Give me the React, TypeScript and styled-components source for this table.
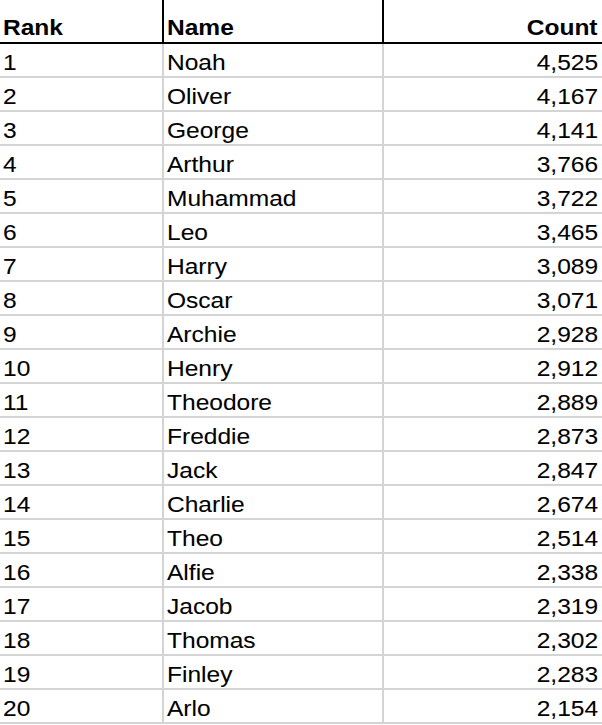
import React from "react";
import styled, { createGlobalStyle } from "styled-components";

const GlobalStyle = createGlobalStyle`
  html, body {
    margin: 0;
    padding: 0;
    background: #ffffff;
  }
  body {
    font-family: "Liberation Sans", Arial, Helvetica, sans-serif;
    color: #000000;
  }
`;

const Sheet = styled.div`
  display: grid;
  grid-template-columns: 164px 220px 1fr;
  width: 602px;
`;

type Align = "left" | "right";

const HeaderCell = styled.div<{ $align: Align; $last?: boolean }>`
  box-sizing: border-box;
  height: 44px;
  display: flex;
  align-items: flex-end;
  justify-content: ${(p) => (p.$align === "right" ? "flex-end" : "flex-start")};
  padding: 0 ${(p) => (p.$align === "right" ? "4px" : "0")} 2px
    ${(p) => (p.$align === "left" ? "3px" : "0")};
  border-bottom: 2px solid #000000;
  border-right: ${(p) => (p.$last ? "none" : "2px solid #000000")};
  font-weight: 700;
  font-size: 22px;
  line-height: 24px;
  white-space: nowrap;
`;

const Cell = styled.div<{ $align: Align; $last?: boolean }>`
  box-sizing: border-box;
  height: 34px;
  display: flex;
  align-items: flex-end;
  justify-content: ${(p) => (p.$align === "right" ? "flex-end" : "flex-start")};
  padding: 0 ${(p) => (p.$align === "right" ? "4px" : "0")} 1px
    ${(p) => (p.$align === "left" ? "3px" : "0")};
  border-bottom: 2px solid #d4d4d4;
  border-right: ${(p) => (p.$last ? "none" : "2px solid #d4d4d4")};
  font-size: 22px;
  line-height: 24px;
  white-space: nowrap;
  -webkit-text-stroke: 0.08px #000000;
`;

const Text = styled.span<{ $align: Align }>`
  display: inline-block;
  transform: scaleX(1.115);
  transform-origin: ${(p) => (p.$align === "right" ? "right" : "left")} bottom;
`;

const rows: [number, string, string][] = [
  [1, "Noah", "4,525"],
  [2, "Oliver", "4,167"],
  [3, "George", "4,141"],
  [4, "Arthur", "3,766"],
  [5, "Muhammad", "3,722"],
  [6, "Leo", "3,465"],
  [7, "Harry", "3,089"],
  [8, "Oscar", "3,071"],
  [9, "Archie", "2,928"],
  [10, "Henry", "2,912"],
  [11, "Theodore", "2,889"],
  [12, "Freddie", "2,873"],
  [13, "Jack", "2,847"],
  [14, "Charlie", "2,674"],
  [15, "Theo", "2,514"],
  [16, "Alfie", "2,338"],
  [17, "Jacob", "2,319"],
  [18, "Thomas", "2,302"],
  [19, "Finley", "2,283"],
  [20, "Arlo", "2,154"],
];

export default function App() {
  return (
    <>
      <GlobalStyle />
      <Sheet>
        <HeaderCell $align="left">
          <Text $align="left">Rank</Text>
        </HeaderCell>
        <HeaderCell $align="left">
          <Text $align="left">Name</Text>
        </HeaderCell>
        <HeaderCell $align="right" $last>
          <Text $align="right">Count</Text>
        </HeaderCell>
        {rows.map(([rank, name, count]) => (
          <React.Fragment key={rank}>
            <Cell $align="left">
              <Text $align="left">{rank}</Text>
            </Cell>
            <Cell $align="left">
              <Text $align="left">{name}</Text>
            </Cell>
            <Cell $align="right" $last>
              <Text $align="right">{count}</Text>
            </Cell>
          </React.Fragment>
        ))}
      </Sheet>
    </>
  );
}
